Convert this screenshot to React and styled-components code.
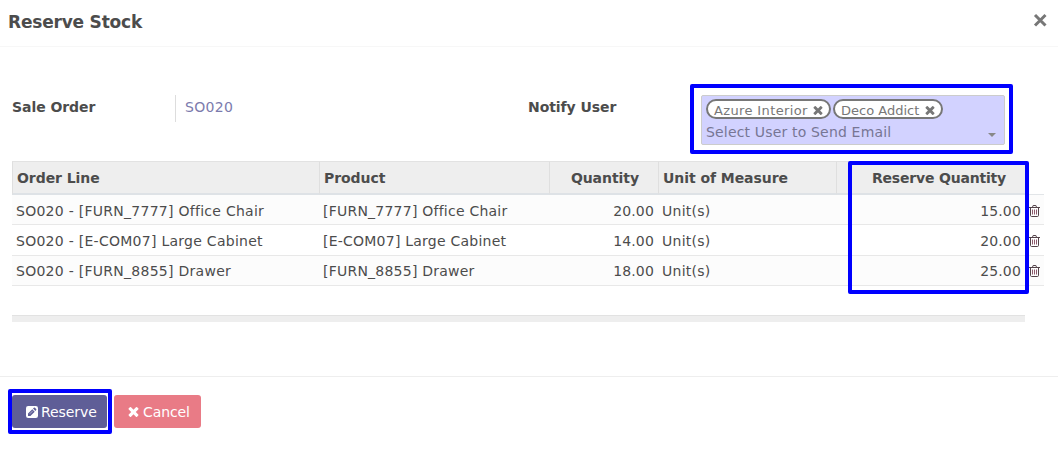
import React from 'react';
import styled, { createGlobalStyle } from 'styled-components';

const GlobalStyle = createGlobalStyle`
  * { box-sizing: border-box; }
  body {
    margin: 0;
    background: #fff;
    color: #4c4c4c;
    font: 14px/20px 'DejaVu Sans', Verdana, sans-serif;
  }
`;

const Dialog = styled.div`
  display: flex;
  flex-direction: column;
  height: 449px;
  overflow: hidden;
`;

const Header = styled.header`
  display: flex;
  justify-content: space-between;
  height: 47px;
  padding: 12px 11px 0 8px;
  border-bottom: 1px solid #f7f7f7;
`;

const Title = styled.h1`
  margin: 0;
  font-size: 17px;
  line-height: 20px;
  letter-spacing: -0.2px;
`;

const CloseButton = styled.button`
  display: flex;
  height: 15px;
  padding: 0;
  border: 0;
  background: none;
  color: #777;
`;

const Body = styled.main`
  height: 330px;
  padding: 48px 14px 0 12px;
  border-bottom: 1px solid #eee;
`;

const Fields = styled.div`
  display: grid;
  grid-template-columns: 163px 353px 173px 304px;
  align-items: start;
  height: 66px;
`;

const Label = styled.label`
  padding-top: 2px;
  font-weight: bold;
  letter-spacing: -0.06px;
`;

const Link = styled.a`
  height: 27px;
  padding: 2px 0 0 9px;
  border-left: 1px solid #ddd;
  color: #7c7bad;
  letter-spacing: 0.3px;
`;

const UserPicker = styled.div`
  position: relative;
  width: 304px;
  height: 50px;
  padding: 3px 4px;
  border: 1px solid #ccc;
  border-radius: 2px;
  background: #d2d2ff;
  color: #777694;
`;

const TagList = styled.div`
  display: flex;
  gap: 2px;
`;

const Tag = styled.span`
  display: flex;
  align-items: center;
  justify-content: space-between;
  width: ${(p) => p.$width}px;
  height: 20px;
  padding: 3px 6px 0 6px;
  border: 2px solid #777;
  border-radius: 10px;
  background: #fff;
  color: #777;
  font-size: 13px;
  line-height: 16px;
  letter-spacing: ${(p) => p.$track}px;
  white-space: nowrap;
`;

const PickerInput = styled.div`
  display: flex;
  justify-content: space-between;
  align-items: center;
  padding: 3px 4px 0 0;
  letter-spacing: 0.17px;
`;

const Caret = styled.span`
  margin-top: 6px;
  border: 4px solid transparent;
  border-top-color: #888;
  border-bottom: 0;
`;

const Highlight = styled.span`
  position: absolute;
  inset: ${(p) => p.$inset};
  border: 4px solid #00f;
  border-radius: 2px;
  pointer-events: none;
`;

const TableArea = styled.div`
  position: relative;
`;

const columns = '307px 230px 109px 178px 189px 19px';

const HeadRow = styled.div`
  display: grid;
  grid-template-columns: ${columns};
  height: 34px;
`;

const HeadCell = styled.div`
  padding: 6px ${(p) => (p.$right ? 19 : 4)}px 0 4px;
  border-top: 1px solid #e2e2e2;
  border-bottom: 2px solid #dee2e6;
  border-left: 1px solid #dfdfdf;
  background: #eee;
  font-weight: bold;
  letter-spacing: ${(p) => p.$track || -0.06}px;
  text-align: ${(p) => (p.$right ? 'right' : 'left')};
`;

const HeadSpacer = styled.div`
  border-bottom: 1px solid #e2e5e8;
`;

const Row = styled.div`
  display: grid;
  grid-template-columns: ${columns};
  align-items: center;
  height: ${(p) => p.$height}px;
  padding-top: ${(p) => p.$top}px;
  border-bottom: 1px solid #e8e8e8;
  background: ${(p) => (p.$striped ? '#fcfcfc' : '#fff')};
`;

const Cell = styled.div`
  padding: 0 4px;
  letter-spacing: ${(p) => p.$track || 0.27}px;
  text-align: ${(p) => (p.$right ? 'right' : 'left')};
  white-space: nowrap;
`;

const DeleteButton = styled.button`
  display: flex;
  padding: 0 0 0 4px;
  border: 0;
  background: none;
  color: #54434a;
`;

const TableFooter = styled.div`
  width: 1013px;
  height: 7px;
  margin-top: 29px;
  border-top: 1px solid #e2e2e2;
  background: #eee;
`;

const Footer = styled.footer`
  display: flex;
  gap: 7px;
  padding: 18px 12px;
`;

const Button = styled.button`
  position: relative;
  display: flex;
  align-items: center;
  gap: ${(p) => p.$gap}px;
  width: ${(p) => p.$width}px;
  height: 33px;
  padding: 1px 0 0 14px;
  border: 0;
  border-radius: 3px;
  background: ${(p) => p.$color};
  color: #fff;
  font: inherit;
  letter-spacing: ${(p) => p.$track}px;
`;

const CrossIcon = ({ size }) => (
  <svg width={size} height={size} viewBox="238 174 1316 1316" fill="currentColor">
    <path d="M1490 1130q0 40-28 68l-136 136q-28 28-68 28t-68-28l-294-294-294 294q-28 28-68 28t-68-28l-136-136q-28-28-28-68t28-68l294-294-294-294q-28-28-28-68t28-68l136-136q28-28 68-28t68 28l294 294 294-294q28-28 68-28t68 28l136 136q28 28 28 68t-28 68l-294 294 294 294q28 28 28 68z" />
  </svg>
);

const CloseIcon = () => (
  <svg width="14" height="15" viewBox="0 0 14 15" fill="none" stroke="currentColor" strokeWidth="3">
    <path d="M2 3l10.5 10.5M12.5 3L2 13.5" />
  </svg>
);

const EditIcon = () => (
  <svg width="12" height="12" viewBox="0 0 12 12">
    <rect width="12" height="12" rx="2.2" fill="#fff" />
    <path d="M2 7.6l4.3-4.3 2.4 2.4L4.4 10H2zM7 2.6l.9-.8q.5-.4 1 0l1.3 1.3q.4.5 0 1l-.8.9z" fill="#5f5e97" />
    <path d="M3.8 7.8l3-3" stroke="#fff" strokeWidth=".5" />
  </svg>
);

const TrashIcon = () => (
  <svg width="11" height="12" viewBox="0 0 11 12" fill="none" stroke="currentColor">
    <path d="M0 2.5h11M3.5 2.2l.6-1.7h2.8l.6 1.7M1.5 3v7.3q0 1.2 1 1.2h6q1 0 1-1.2V3" />
    <path d="M3.5 4.5v5M5.5 4.5v5M7.5 4.5v5" stroke="#8d5a6c" />
  </svg>
);

const lines = [
  { name: 'SO020 - [FURN_7777] Office Chair', product: '[FURN_7777] Office Chair', qty: '20.00', reserve: '15.00', height: 30, top: 2 },
  { name: 'SO020 - [E-COM07] Large Cabinet', product: '[E-COM07] Large Cabinet', qty: '14.00', reserve: '20.00', height: 31, top: 1 },
  { name: 'SO020 - [FURN_8855] Drawer', product: '[FURN_8855] Drawer', qty: '18.00', reserve: '25.00', height: 30, top: 0 },
];

export default function App() {
  return (
    <Dialog>
      <GlobalStyle />
      <Header>
        <Title>Reserve Stock</Title>
        <CloseButton aria-label="Close"><CloseIcon /></CloseButton>
      </Header>
      <Body>
        <Fields>
          <Label>Sale Order</Label>
          <Link>SO020</Link>
          <Label>Notify User</Label>
          <UserPicker>
            <TagList>
              <Tag $width={125} $track={0.37}>Azure Interior<CrossIcon size={10} /></Tag>
              <Tag $width={110} $track={0}>Deco Addict<CrossIcon size={10} /></Tag>
            </TagList>
            <PickerInput>Select User to Send Email<Caret /></PickerInput>
            <Highlight $inset="-12px -9px -10px -12px" />
          </UserPicker>
        </Fields>
        <TableArea>
          <HeadRow>
            <HeadCell>Order Line</HeadCell>
            <HeadCell>Product</HeadCell>
            <HeadCell $right>Quantity</HeadCell>
            <HeadCell>Unit of Measure</HeadCell>
            <HeadCell $right $track={-0.19}>Reserve Quantity</HeadCell>
            <HeadSpacer />
          </HeadRow>
          {lines.map((line, i) => (
            <Row key={line.name} $height={line.height} $top={line.top} $striped={i % 2 === 0}>
              <Cell>{line.name}</Cell>
              <Cell $track={0.23}>{line.product}</Cell>
              <Cell $right $track={0.15}>{line.qty}</Cell>
              <Cell>Unit(s)</Cell>
              <Cell $right $track={0.15}>{line.reserve}</Cell>
              <DeleteButton aria-label="Delete line"><TrashIcon /></DeleteButton>
            </Row>
          ))}
          <Highlight $inset="0 15px -8px 836px" />
        </TableArea>
        <TableFooter />
      </Body>
      <Footer>
        <Button $width={95} $gap={3} $color="#5f5e97" $track={-0.08}>
          <EditIcon />Reserve
          <Highlight $inset="-6px -5px -6px -4px" />
        </Button>
        <Button $width={87} $gap={4} $color="#e97b86" $track={-0.1}>
          <CrossIcon size={11} />Cancel
        </Button>
      </Footer>
    </Dialog>
  );
}
